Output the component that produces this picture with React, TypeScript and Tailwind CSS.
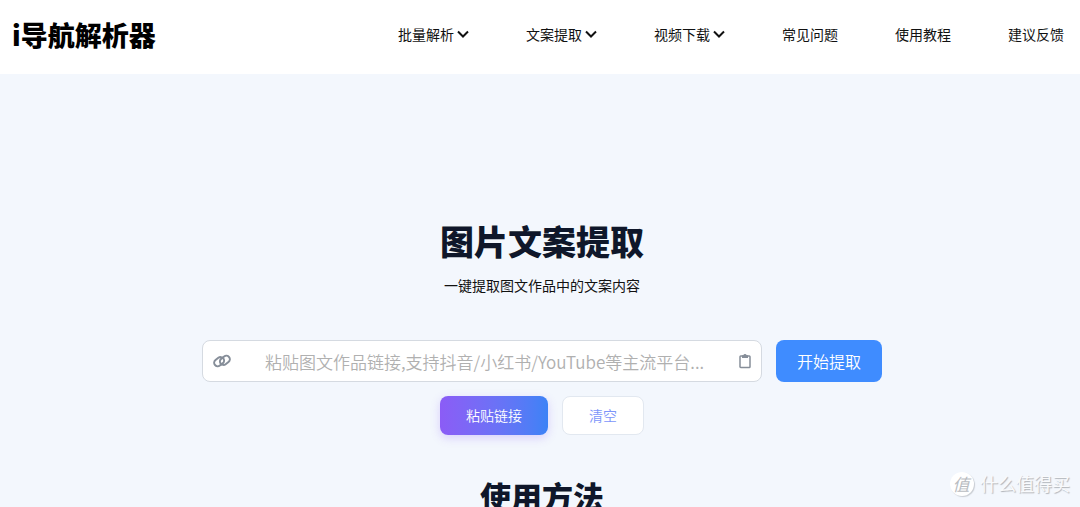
import { useState } from "react";

const menus = ["批量解析", "文案提取", "视频下载"];
const links = ["常见问题", "使用教程", "建议反馈"];

function Chevron() {
  return (
    <svg className="h-3 w-3" viewBox="0 0 12 12" fill="none" stroke="currentColor" strokeWidth="2" aria-hidden="true">
      <path d="M1 3.5 6 8.5 11 3.5" />
    </svg>
  );
}

function LinkIcon() {
  return (
    <svg className="h-4 w-[18px]" viewBox="0 0 18 16" fill="none" stroke="currentColor" strokeWidth="2" aria-hidden="true">
      <rect x="0.8" y="5.2" width="10.6" height="7" rx="3.5" transform="rotate(-38 6.1 8.7)" />
      <rect x="6.6" y="3.8" width="10.6" height="7" rx="3.5" transform="rotate(-38 11.9 7.3)" />
    </svg>
  );
}

function ClipboardIcon() {
  return (
    <svg className="h-4 w-3" viewBox="0 0 12 16" fill="none" stroke="currentColor" aria-hidden="true">
      <rect x="1" y="3" width="10" height="11.5" rx="0.8" strokeWidth="1.5" />
      <path d="M3 2.3h1.3a1.8 1.8 0 0 1 3.4 0H9V5H3Z" fill="currentColor" stroke="none" />
    </svg>
  );
}

export default function App() {
  const [url, setUrl] = useState("");

  const paste = async () => {
    setUrl(await navigator.clipboard.readText());
  };

  return (
    <div className="relative h-screen overflow-hidden bg-[#f3f7fd] font-['Noto_Sans_CJK_SC',sans-serif] text-[#111111]">
      <header className="flex items-start justify-between bg-white pr-4 pb-[19px] pl-3">
        <a href="#" className="pt-[15px] text-[27px] leading-10 font-black text-black">
          i导航解析器
        </a>
        <nav className="flex items-center gap-[57px] pt-6 text-sm leading-5">
          {menus.map((label) => (
            <button key={label} type="button" className="flex items-center gap-[3px]">
              {label}
              <Chevron />
            </button>
          ))}
          {links.map((label) => (
            <a key={label} href="#">
              {label}
            </a>
          ))}
        </nav>
      </header>

      <main className="flex flex-col items-center pt-[143px] pl-1">
        <h1 className="text-[34px] leading-[48px] font-black text-[#0f172a]">图片文案提取</h1>
        <p className="mt-2.5 text-sm leading-5">一键提取图文作品中的文案内容</p>

        <form className="mt-[45px] flex w-full max-w-[680px] gap-3.5" onSubmit={(e) => e.preventDefault()}>
          <div className="flex h-[42px] flex-1 items-center rounded-lg border border-[#d5dae1] bg-white px-2.5 text-[#868e99]">
            <LinkIcon />
            <input
              type="text"
              aria-label="作品链接"
              value={url}
              onChange={(e) => setUrl(e.target.value)}
              placeholder="粘贴图文作品链接,支持抖音/小红书/YouTube等主流平台..."
              className="ml-[34px] h-full min-w-0 flex-1 bg-transparent text-[17px] font-[350] text-[#111111] outline-none placeholder:text-[#b0b0b0]"
            />
            <button type="button" aria-label="粘贴" onClick={paste}>
              <ClipboardIcon />
            </button>
          </div>
          <button type="submit" className="h-[42px] rounded-lg bg-[#3f8cff] px-[21px] text-base font-[350] text-white">
            开始提取
          </button>
        </form>

        <div className="mt-3.5 flex gap-3.5">
          <button
            type="button"
            onClick={paste}
            className="h-[39px] rounded-lg bg-linear-to-r from-[#8b5cf6] to-[#3b82f6] px-[26px] pb-0.5 text-sm font-[350] text-white shadow-[0_3px_10px_rgba(139,92,246,0.25)]"
          >
            粘贴链接
          </button>
          <button
            type="button"
            onClick={() => setUrl("")}
            className="h-[39px] rounded-lg border border-[#e2e8f0] bg-white px-[26px] pb-0.5 text-sm font-[350] text-[#7c95fa]"
          >
            清空
          </button>
        </div>

        <h2 className="mt-[39px] text-[31px] leading-[44px] font-black text-[#0f172a]">使用方法</h2>
      </main>

      <div className="absolute right-2.5 bottom-2.5 flex items-center gap-1.5 text-[#f9fafc]">
        <span className="flex h-6 w-6 items-center justify-center rounded-full bg-white pr-0.5 pb-0.5 text-[17px] leading-none text-[#b9bcc1] italic shadow-[1px_1px_1px_#c8ccd2]">
          值
        </span>
        <span className="pb-0.5 text-lg leading-6 [text-shadow:1px_1px_1px_#b0b3b8]">什么值得买</span>
      </div>
    </div>
  );
}
